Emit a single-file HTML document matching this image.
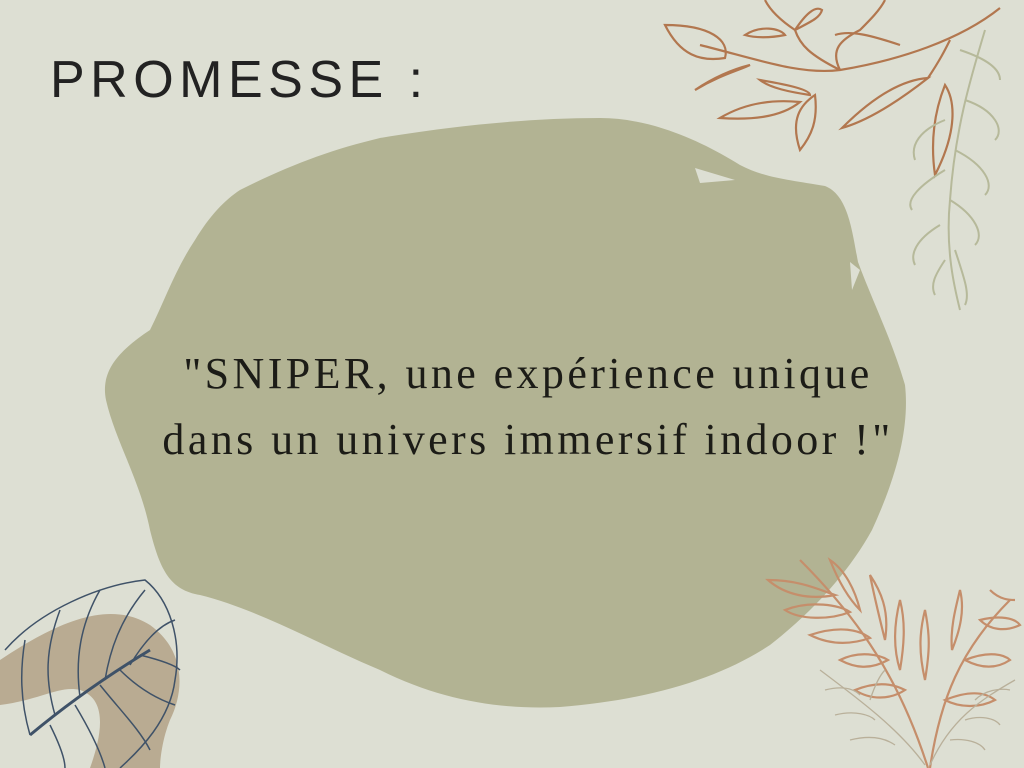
<!DOCTYPE html>
<html><head><meta charset="utf-8"><style>
html,body{margin:0;padding:0;}
body{width:1024px;height:768px;background:#dddfd3;position:relative;overflow:hidden;}
svg{position:absolute;left:0;top:0;}
.t{position:absolute;left:50px;top:50px;font-family:"Liberation Sans",sans-serif;font-size:52px;letter-spacing:5.5px;color:#222;line-height:60px;}
.q{position:absolute;left:0;width:1056px;text-align:center;top:341px;font-family:"Liberation Serif",serif;font-size:44px;letter-spacing:3.4px;line-height:66px;color:#1c1c17;}
</style></head><body>
<svg width="1024" height="768" viewBox="0 0 1024 768">
<path fill="#b2b393" d="M240 190 C290 165 330 150 380 138 C440 128 520 118 600 118 C650 118 700 140 740 165 C765 178 790 180 825 186 C848 195 852 230 858 262 C872 300 892 340 905 385 C910 430 895 480 872 530 C850 570 815 610 770 645 C720 678 650 700 560 707 C500 710 440 700 380 670 C320 645 260 610 200 595 C170 590 160 570 150 530 C140 480 115 440 106 400 C100 370 120 350 150 330 C165 300 175 270 195 240 C210 215 225 200 240 190 Z"/>
<path fill="#dddfd3" d="M695 168 L735 180 L700 183 Z M850 262 L860 270 L852 290 Z"/>
<path fill="#b9ab92" d="M0 660 C60 620 110 600 150 625 C185 650 185 690 170 720 C160 745 160 768 160 768 L90 768 C100 740 110 700 80 690 C60 685 40 700 0 705 Z"/>
<g fill="none" stroke="#3f5268" stroke-width="1.5">
<path d="M5 650 C40 610 100 585 145 580 C170 600 182 640 175 680 C170 720 140 750 120 768"/>
<path d="M30 735 C60 710 100 680 150 650" stroke-width="3"/>
<path d="M30 735 C20 700 20 670 25 640 M55 715 C45 680 45 650 60 610 M80 697 C75 660 80 625 100 590 M105 680 C110 650 120 620 145 590 M130 665 C145 640 160 625 175 620 M140 655 C160 660 175 665 180 670 M120 670 C140 690 160 700 175 705 M100 685 C120 710 140 730 150 750 M75 705 C90 730 100 750 105 768 M50 725 C60 745 65 760 65 768"/>
</g>
<g fill="none" stroke="#b2774f" stroke-width="2.2">
<path d="M700 45 C760 60 800 75 840 70 C900 60 960 40 1000 8"/>
<path d="M665 25 C680 55 700 62 725 58 C730 40 710 25 665 25 Z"/>
<path d="M695 90 C720 75 740 70 750 65 C730 70 710 80 695 90 Z"/>
<path d="M720 118 C750 100 780 100 800 102 C780 118 750 120 720 118 Z"/>
<path d="M760 80 C790 85 810 90 810 95 C790 92 770 88 760 80 Z"/>
<path d="M800 150 C790 120 800 105 815 95 C818 120 812 135 800 150 Z"/>
<path d="M840 70 C810 55 800 45 795 30 C780 20 770 10 765 0 M795 30 C810 22 820 18 822 10 C815 5 805 15 795 30"/>
<path d="M745 35 C760 25 780 28 785 35 C770 38 755 38 745 35 Z"/>
<path d="M840 70 C830 50 840 40 860 30 C870 20 880 10 885 0 M900 45 C870 35 850 30 835 35"/>
<path d="M842 128 C870 100 900 80 928 78 C900 100 870 120 842 128 Z"/>
<path d="M928 78 C940 60 945 50 950 40 M935 175 C930 140 935 110 945 85 C955 100 958 130 935 175 Z"/>
</g>
<g fill="none" stroke="#b6b99a" stroke-width="2">
<path d="M985 30 C970 80 955 130 950 200 C945 250 955 290 960 310"/>
<path d="M960 50 C990 60 1000 70 1000 80 M965 100 C995 110 1005 130 995 140 M955 150 C985 165 995 185 985 195 M950 200 C975 215 985 235 975 245 M945 120 C920 130 910 145 915 160 M945 170 C920 185 905 200 912 210 M940 225 C915 240 910 255 915 265 M955 250 C965 280 970 295 965 305 M945 260 C935 275 930 285 935 295"/>
</g>
<g fill="none" stroke="#c58e6b" stroke-width="2.2">
<path d="M800 560 C860 620 900 680 928 768"/>
<path d="M930 768 C940 700 960 650 1010 600"/>
<path d="M768 580 C800 580 820 590 835 595 C810 600 785 595 768 580 Z M785 610 C810 600 840 605 850 612 C830 620 800 620 785 610 Z M810 635 C840 625 860 630 870 638 C850 645 830 645 810 635 Z M840 660 C860 650 880 655 888 660 C870 670 855 668 840 660 Z M855 690 C880 680 895 685 905 690 C890 700 870 700 855 690 Z M830 560 C840 585 850 600 860 610 C855 590 845 570 830 560 Z M870 575 C875 600 880 620 885 640 C890 610 880 590 870 575 Z M900 600 C905 620 905 640 900 670 C892 645 895 620 900 600 Z"/>
<path d="M960 590 C955 610 950 630 952 650 C960 630 965 610 960 590 Z M990 590 C1000 600 1010 600 1015 600 M980 620 C1000 615 1015 618 1020 625 C1005 632 990 630 980 620 Z M965 660 C990 650 1005 655 1010 660 C995 670 980 668 965 660 Z M945 700 C970 690 985 692 995 700 C980 708 960 708 945 700 Z M925 610 C930 635 930 650 925 680 C918 650 920 630 925 610 Z"/>
</g>
<g fill="none" stroke="#b9b09a" stroke-width="1.3">
<path d="M820 670 C860 700 900 730 925 765 M930 765 C950 720 980 700 1015 680"/>
<path d="M825 690 C845 685 855 690 860 695 M835 715 C855 710 870 715 875 720 M850 740 C870 735 885 738 895 745 M870 700 C875 685 880 675 885 670 M975 700 C985 690 1000 688 1010 690 M965 720 C980 715 995 718 1000 725 M950 740 C965 738 980 742 985 750"/>
</g>
</svg>
<div class="t">PROMESSE :</div>
<div class="q">"SNIPER, une expérience unique<br>dans un univers immersif indoor !"</div>
</body></html>
